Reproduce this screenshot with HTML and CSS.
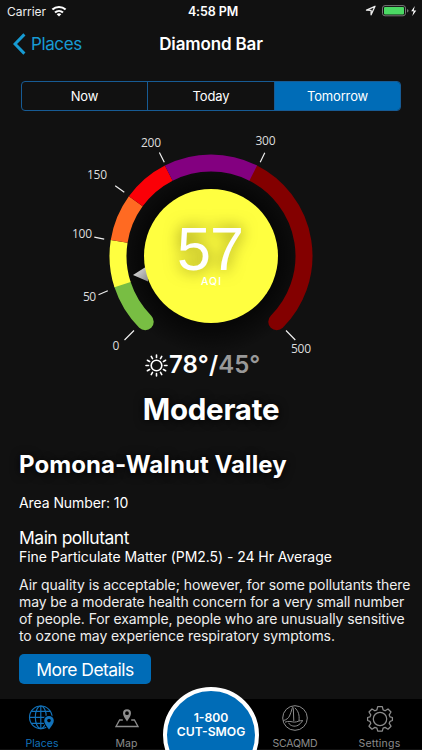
FILE: index.html
```html
<!DOCTYPE html>
<html lang="en">
<head>
<meta charset="utf-8">
<title>Diamond Bar</title>
<link rel="stylesheet" href="styles.css">
</head>
<body>
<div class="app">
  <header class="status">
    <div class="status-left"><span class="carrier">Carrier</span>
      <svg width="16" height="12" viewBox="0 0 16 12"><g fill="none" stroke="#fff" stroke-width="2.1"><path d="M1.4 4.6a9.6 9.6 0 0 1 13.2 0"/><path d="M4 7.5a5.9 5.9 0 0 1 8 0"/></g><path d="M5.7 9.2a3.4 3.4 0 0 1 4.6 0L8 11.5z" fill="#fff"/></svg>
    </div>
    <div class="clock">4:58 PM</div>
    <svg class="status-right" width="54" height="14" viewBox="0 0 54 14">
      <path d="M1.5 6.2 10 2.3 6.1 10.8V6.4z" fill="none" stroke="#eee" stroke-width="1.3" stroke-linejoin="round"/>
      <rect x="17.5" y="1.6" width="23" height="10.2" rx="2.5" fill="none" stroke="#777" stroke-width="1"/>
      <rect x="19" y="3" width="20" height="7.4" rx="1" fill="#4bd964"/>
      <path d="M42 5v3.5q1.5-.4 1.5-1.75T42 5" fill="#777"/>
      <path d="M49.8 2 46.2 7.2h2.4L47.3 12l4-5.6h-2.6z" fill="#fff"/>
    </svg>
  </header>
  <nav class="nav">
    <a class="back"><svg width="13" height="22" viewBox="0 0 13 22"><path d="M11.4 1.4 2 11l9.4 9.6" fill="none" stroke="#179bd3" stroke-width="3"/></svg><span>Places</span></a>
    <h1>Diamond Bar</h1>
  </nav>
  <div class="segments"><span>Now</span><span>Today</span><span class="active">Tomorrow</span></div>
  <svg class="gauge" width="422" height="240" viewBox="0 120 422 240">
    <defs>
      <radialGradient id="halo"><stop offset=".65" stop-color="#000" stop-opacity=".7"/><stop offset="1" stop-color="#000" stop-opacity="0"/></radialGradient>
      <linearGradient id="needle" x1="0" y1="0" x2="1" y2="1"><stop offset="0" stop-color="#eee"/><stop offset="1" stop-color="#888"/></linearGradient>
    </defs>
    <circle cx="211" cy="256" r="99" fill="url(#halo)"/>
    <g transform="translate(211 256)" fill="none" stroke-width="17">
      <g stroke-linecap="round">
        <path d="M-65.76 65.76A93 93 0 0 1-88.45 28.74" stroke="#78be43"/>
        <path d="M42.22-82.86A93 93 0 0 1 65.76 65.76" stroke="#830000"/>
      </g>
      <path d="M-88.45 28.74A93 93 0 0 1-91.86-14.55" stroke="#ffff40"/>
      <path d="M-91.86-14.55A93 93 0 0 1-75.24-54.66" stroke="#ff6a22"/>
      <path d="M-75.24-54.66A93 93 0 0 1-42.22-82.86" stroke="#fb0007"/>
      <path d="M-42.22-82.86A93 93 0 0 1 42.22-82.86" stroke="#830080"/>
    </g>
    <path d="M133 275 148 265.5v16z" fill="url(#needle)"/>
    <circle cx="211" cy="256" r="67" fill="#ffff40"/>
    <text x="210.5" y="270" class="aqi" textLength="67">57</text>
    <text x="211" y="285" class="unit" textLength="20">AQI</text>
    <path d="M134 330.5 124.5 340M107.8 290.8 98.5 294.8M104.2 239.2 94.3 237.2M124.3 192.2 115.2 185.7M164.3 162.2 159.4 152.4M260.2 162.2 264.8 152.8M286 330.5 295.3 340" stroke="#eee" stroke-width="1.2"/>
    <g class="ticks">
      <text x="116" y="350">0</text>
      <text x="89.5" y="301" textLength="13">50</text>
      <text x="82" y="238" textLength="20">100</text>
      <text x="97" y="179" textLength="20">150</text>
      <text x="151" y="147" textLength="20">200</text>
      <text x="265.5" y="145" textLength="20">300</text>
      <text x="301" y="353" textLength="20">500</text>
    </g>
  </svg>
  <div class="temps">
    <svg width="23" height="23" viewBox="-11.5 -11.5 23 23" fill="none" stroke="#fff" stroke-width="1.6" stroke-linecap="round"><circle r="5.3"/><path d="M0-8v-2.5M0 8v2.5M-8 0h-2.5M8 0h2.5M4-6.93l1.25-2.17M6.93-4l2.17-1.25M6.93 4l2.17 1.25M4 6.93l1.25 2.17M-4 6.93l-1.25 2.17M-6.93 4l-2.17 1.25M-6.93-4l-2.17-1.25M-4-6.93l-1.25-2.17"/></svg>
    <span class="temp">78°/<b>45°</b></span>
  </div>
  <h2 class="level">Moderate</h2>
  <main class="details">
    <h3>Pomona-Walnut Valley</h3>
    <p class="area">Area Number: 10</p>
    <p class="main-label">Main pollutant</p>
    <p class="pollutant">Fine Particulate Matter (PM2.5) - 24 Hr Average</p>
    <p class="advice"><span>Air quality is acceptable; however, for some pollutants there</span><span class="snug">may be a moderate health concern for a very small number</span><span class="snug">of people. For example, people who are unusually sensitive</span><span>to ozone may experience respiratory symptoms.</span></p>
    <button class="more">More Details</button>
  </main>
  <footer class="tabs">
    <a class="tab on"><svg width="28" height="26" viewBox="0 0 28 26" fill="none" stroke="#1272ba" stroke-width="1.15"><circle cx="12.8" cy="12.3" r="11.3"/><ellipse cx="12.8" cy="12.3" rx="5.5" ry="11.3"/><path d="M12.8 1v22.6M1.5 12.3h22.6M3.3 6.3h19M3.3 18.3h19"/><path d="M21 24.5c-2.7-3.6-4.8-6-4.8-8.8a4.8 4.8 0 0 1 9.6 0c0 2.8-2.1 5.2-4.8 8.8z" fill="#1272ba" stroke="#000" stroke-width="2" paint-order="stroke"/><circle cx="21" cy="15.6" r="1.8" fill="#000" stroke="none"/></svg><span>Places</span></a>
    <a class="tab map"><svg width="24" height="26" viewBox="0 -2 24 26" fill="none" stroke="#8c8c8c" stroke-width="1.3"><path d="M7.8 13H4.6L1 19.5h22L19.4 13h-3.2"/><path fill="#8c8c8c" fill-rule="evenodd" stroke="none" d="M12 14.5C9.7 11 8 8.7 8 6.3a4 4 0 0 1 8 0c0 2.4-1.7 4.7-4 8.2zM12 8.1a1.9 1.9 0 1 0 0-3.8 1.900 1.900 0 0 0 0 3.800z"/></svg><span>Map</span></a>
    <a class="call"><span>1-800</span><span>CUT-SMOG</span></a>
    <a class="tab scaqmd"><svg width="28" height="28" viewBox="0 0 28 28" fill="none" stroke="#8c8c8c" stroke-width="1"><circle cx="14" cy="14" r="12.3"/><path d="M2.500 16.500c3-.8 4.700-2 6-4.500 1.200-2.300 1.700-4.700 2.700-7.800.4-1.300 1-1.300 1.100.1l.5 12.700M13.800 3.800c3.600 3.300 4.800 7 4.200 13.200M4 18.200c3.500-1.700 6.500-.2 9.500-.1 2.700.1 4.300-1.800 8.500-1.400M7.500 18.800c1.700 3.200 6 4.300 9.500 2.500 1.800-.9 3-2.300 4.300-4.200"/></svg><span>SCAQMD</span></a>
    <a class="tab settings"><svg width="28" height="28" viewBox="-14 -14 28 28" fill="none" stroke="#8c8c8c" stroke-width="1.25" stroke-linejoin="round"><circle r="6.7"/><path d="M-2.300-12.300h4.600l.8 3.200 2 .9 2.900-1.800 3 3-1.800 2.900.9 2 2.300.6v3l-2.300.8-.9 2 1.800 2.900-3 3-2.900-1.800-2 .8-.8 3h-4.600l-.8-3-2-.8-2.900 1.800-3-3 1.800-2.900-.9-2-2.300-.8v-3l2.300-.6.9-2L-11-7l3-3 2.900 1.800 2-.9z"/></svg><span>Settings</span></a>
  </footer>
</div>
</body>
</html>
```

FILE: styles.css
```css
* { box-sizing: border-box; margin: 0; padding: 0; }
body { background: #111; }
.app { width: 422px; height: 750px; overflow: hidden; background: #111; color: #fff; font-family: Inter, "Liberation Sans", sans-serif; display: flex; flex-direction: column; }
svg { display: block; flex: none; }
span, h1, h2, h3 { white-space: nowrap; }
.status { height: 22px; flex: none; display: grid; grid-template-columns: 1fr auto 1fr; align-items: center; padding: 0 3px 0 7px; font-size: 12px; }
.status-left { display: flex; gap: 5px; align-items: center; }
.carrier { letter-spacing: -.05px; color: #eee; }
.clock { font-weight: 600; font-size: 12.5px; letter-spacing: -.1px; }
.status-right { justify-self: end; }
.nav { height: 44px; flex: none; display: grid; grid-template-columns: 1fr auto 1fr; align-items: center; padding: 0 13px; }
.back { display: flex; align-items: center; gap: 5px; color: #179bd3; font-size: 17px; letter-spacing: -.4px; }
.nav h1 { font-size: 17px; font-weight: 600; letter-spacing: -.15px; }
.segments { flex: none; display: grid; grid-template-columns: 125px 127px 1fr; margin: 15px 21px 0; height: 30px; border: 1px solid #175b94; border-radius: 4px; overflow: hidden; font-size: 13px; letter-spacing: -.15px; }
.segments span { display: flex; align-items: center; justify-content: center; }
.segments span + span { border-left: 1px solid #175b94; }
.segments .active { background: #006cb7; }
.gauge { margin-top: 9px; }
.gauge text { text-anchor: middle; }
.aqi { font: 61px "Liberation Sans", sans-serif; fill: #fff; filter: drop-shadow(0 0 8px rgba(60, 50, 0, .65)); }
.unit { font-size: 10.5px; font-weight: 500; fill: #fff; }
.ticks { font: 12px "Open Sans", sans-serif; fill: #ddd; }
.temps { flex: none; display: flex; height: 24px; margin: -7px 0 0 145px; align-items: center; gap: 1px; }
.temp { font-size: 24px; line-height: 24px; font-weight: 600; letter-spacing: .1px; }
.temp b { color: #999; font-weight: 600; }
.level { text-align: center; font-size: 29.5px; line-height: 36px; height: 36px; margin-top: 14px; font-weight: 700; letter-spacing: -.25px; text-shadow: 0 1px 10px #000; }
.details { flex: none; margin: 23px 0 0 19px; height: 249px; }
.details h3 { font-size: 24px; line-height: 30px; font-weight: 700; letter-spacing: .07px; text-shadow: 0 1px 10px #000; }
.area { font-size: 14px; line-height: 18px; margin-top: 14px; letter-spacing: -.08px; }
.main-label { font-size: 17.5px; line-height: 22px; margin-top: 15px; letter-spacing: -.5px; }
.pollutant { font-size: 14px; line-height: 18px; margin-top: -1px; letter-spacing: -.05px; }
.advice { font-size: 14px; line-height: 17px; margin-top: 10px; color: #eee; letter-spacing: -.07px; }
.advice span { display: block; }
.advice .snug { letter-spacing: -.1px; }
.more { display: block; margin-top: 10px; width: 132px; height: 30px; border: 0; border-radius: 5px; background: #006cb7; color: #fff; font: 17.5px Inter, sans-serif; letter-spacing: -.55px; }
.tabs { flex: none; position: relative; height: 50px; background: #000; display: grid; grid-template-columns: 84px 85px 84px 84px 85px; font-size: 10.5px; color: #8c8c8c; }
.tab { display: flex; flex-direction: column; align-items: center; justify-content: space-between; padding: 6px 0 0; height: 50.5px; letter-spacing: .05px; }
.tab span { line-height: 13px; }
.scaqmd { padding-top: 5px; letter-spacing: -.2px; }
.settings { letter-spacing: .2px; }
.on { color: #1272ba; }
.call { align-self: start; justify-self: center; width: 96px; height: 96px; margin-top: -12px; border: 4px solid #fff; border-radius: 50%; background: #006cb7; color: #fff; display: flex; flex-direction: column; align-items: center; padding-top: 20px; font-size: 12.2px; line-height: 14px; font-weight: 600; }
```
